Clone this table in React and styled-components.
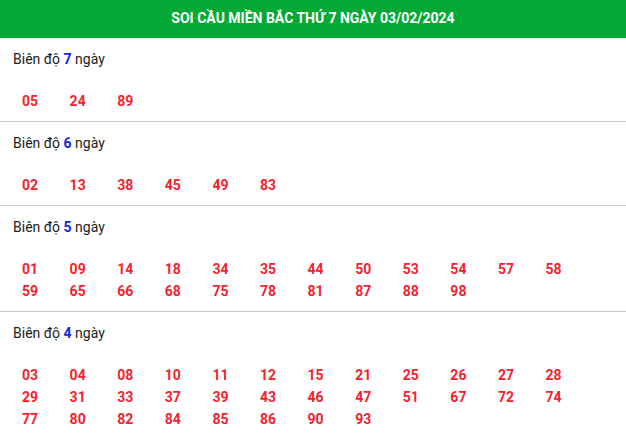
import React from "react";
import styled, { createGlobalStyle } from "styled-components";

const Global = createGlobalStyle`
  html, body { margin: 0; padding: 0; background: #fff; }
  body { font-family: Roboto, "Liberation Sans", Arial, sans-serif; }
  * { box-sizing: border-box; }
`;

const Page = styled.div`
  width: 626px;
  background: #fff;
`;

const Header = styled.div`
  height: 38px;
  background: #03a935;
  color: #fff;
  text-align: center;
  font-size: 14px;
  font-weight: 700;
  line-height: 36px;
`;

const Section = styled.section`
  padding: 11px 0 9px 0;
  border-bottom: ${(p) => (p.$last ? "none" : "1px solid #c8c8c8")};
`;

const Label = styled.div`
  padding-left: 13px;
  font-size: 14px;
  line-height: 20px;
  color: #1c1c1c;
  margin-bottom: 21px;
`;

const Days = styled.span`
  color: #1326e0;
  font-weight: 700;
`;

const Grid = styled.div`
  display: grid;
  grid-template-columns: repeat(12, 47.6px);
  padding-left: 22px;
`;

const Num = styled.span`
  font-size: 14px;
  font-weight: 700;
  line-height: 22px;
  color: #f5222d;
`;

const data = [
  { days: 7, nums: ["05", "24", "89"] },
  { days: 6, nums: ["02", "13", "38", "45", "49", "83"] },
  {
    days: 5,
    nums: ["01","09","14","18","34","35","44","50","53","54","57","58","59","65","66","68","75","78","81","87","88","98"],
  },
  {
    days: 4,
    nums: ["03","04","08","10","11","12","15","21","25","26","27","28","29","31","33","37","39","43","46","47","51","67","72","74","77","80","82","84","85","86","90","93"],
  },
];

export default function App() {
  return (
    <Page>
      <Global />
      <Header>SOI CẦU MIỀN BẮC THỨ 7 NGÀY 03/02/2024</Header>
      {data.map((s, i) => (
        <Section key={s.days} $last={i === data.length - 1}>
          <Label>
            Biên độ <Days>{s.days}</Days> ngày
          </Label>
          <Grid>
            {s.nums.map((n) => (
              <Num key={n}>{n}</Num>
            ))}
          </Grid>
        </Section>
      ))}
    </Page>
  );
}
